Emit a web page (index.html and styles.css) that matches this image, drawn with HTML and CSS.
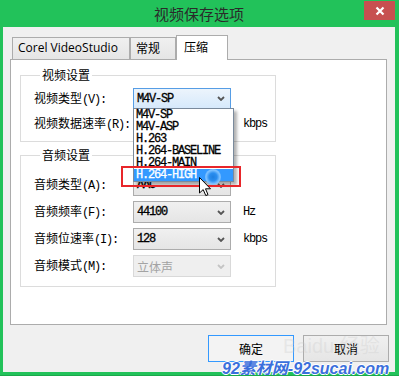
FILE: index.html
```
<!DOCTYPE html>
<html lang="zh-CN">
<head>
    <meta charset="UTF-8">
    <title>视频保存选项</title>
    <link rel="stylesheet" href="styles.css">
</head>
<body>
    <div class="window">
        <div class="titlebar">
            <span></span>
            <span class="title">视频保存选项</span>
            <span class="close">
                <svg width="10" height="10" viewBox="0 0 10 10"><path d="M1.5 1.5 L8.5 8.5 M8.5 1.5 L1.5 8.5" stroke="#fff" stroke-width="2.2"/></svg>
            </span>
        </div>
        <div class="client">
            <div class="tabs">
                <div class="tab">Corel VideoStudio</div>
                <div class="tab">常规</div>
                <div class="tab active">压缩</div>
            </div>
            <div class="panel">
                <fieldset class="group videoGroup">
                    <legend>视频设置</legend>
                    <div class="row">
                        <span class="label">视频类型<span class="mono">(V):</span></span>
                        <div class="combo focused">
                            <span class="mono value">M4V-SP</span>
                            <svg class="chevron" width="8" height="5" viewBox="0 0 8 5"><path d="M1 1 L4 4 L7 1" fill="none" stroke="#555" stroke-width="1.8"/></svg>
                            <!-- open drop-down list -->
                            <ul class="dropList mono value">
                                <li>M4V-SP</li>
                                <li>M4V-ASP</li>
                                <li>H.263</li>
                                <li>H.264-BASELINE</li>
                                <li>H.264-MAIN</li>
                                <li class="selected">H.264-HIGH</li>
                                <span class="redBox"></span>
                                <span class="busy"></span>
                                <svg class="cursor" width="13" height="20" viewBox="0 0 13 20"><path d="M0.5 0.5 L0.5 16 L4.2 12.6 L6.8 18.6 L9 17.6 L6.5 11.8 L11.5 11.8 Z" fill="#fff" stroke="#000" stroke-width="1"/></svg>
                            </ul>
                        </div>
                    </div>
                    <div class="row">
                        <span class="label">视频数据速率<span class="mono">(R):</span></span>
                        <div class="combo"></div>
                        <span class="unit mono">kbps</span>
                    </div>
                </fieldset>
                <fieldset class="group audioGroup">
                    <legend>音频设置</legend>
                    <div class="row">
                        <span class="label">音频类型<span class="mono">(A):</span></span>
                        <div class="combo">
                            <span class="mono value">AAC</span>
                            <svg class="chevron" width="8" height="5" viewBox="0 0 8 5"><path d="M1 1 L4 4 L7 1" fill="none" stroke="#555" stroke-width="1.8"/></svg>
                        </div>
                    </div>
                    <div class="row">
                        <span class="label">音频频率<span class="mono">(F):</span></span>
                        <div class="combo">
                            <span class="mono value">44100</span>
                            <svg class="chevron" width="8" height="5" viewBox="0 0 8 5"><path d="M1 1 L4 4 L7 1" fill="none" stroke="#555" stroke-width="1.8"/></svg>
                        </div>
                        <span class="unit mono">Hz</span>
                    </div>
                    <div class="row">
                        <span class="label">音频位速率<span class="mono">(I):</span></span>
                        <div class="combo">
                            <span class="mono value">128</span>
                            <svg class="chevron" width="8" height="5" viewBox="0 0 8 5"><path d="M1 1 L4 4 L7 1" fill="none" stroke="#555" stroke-width="1.8"/></svg>
                        </div>
                        <span class="unit mono">kbps</span>
                    </div>
                    <div class="row">
                        <span class="label">音频模式<span class="mono">(M):</span></span>
                        <div class="combo disabled">
                            <span>立体声</span>
                            <svg class="chevron" width="8" height="5" viewBox="0 0 8 5"><path d="M1 1 L4 4 L7 1" fill="none" stroke="#c4c4c4" stroke-width="1.8"/></svg>
                        </div>
                    </div>
                </fieldset>
            </div>
            <div class="buttons">
                <button class="btn default">确定</button>
                <button class="btn">取消</button>
            </div>
        </div>
        <div class="wmBaidu">Baidu 经验</div>
        <div class="wmSucai">92素材网-92sucai.com</div>
    </div>
</body>
</html>
```
FILE: styles.css
```
body {
    margin: 0;
    background: #ffffff;
    font-family: "Noto Sans CJK SC", "Noto Sans", sans-serif;
    font-size: 12px;
    color: #000000;
}

.window {
    position: relative;
    width: 399px;
    height: 376px;
    box-sizing: border-box;
    padding: 0 4px 4px 3px;
    background: #22c25a;
    border-bottom: 1px solid #1ba84b;
    overflow: hidden;
}

.titlebar {
    display: grid;
    grid-template-columns: 1fr auto 1fr;
    height: 27px;
}

.title {
    font-size: 15px;
    line-height: 27px;
    color: #2a2a2a;
}

.close {
    justify-self: end;
    align-self: start;
    margin-top: 1px;
    width: 31px;
    height: 19px;
    background: #c75050;
    display: flex;
    align-items: center;
    justify-content: center;
}

.client {
    height: 345px;
    background: #f0f0f0;
    padding-top: 8px;
    box-sizing: border-box;
}

.mono {
    font-family: "Liberation Mono", monospace;
    font-size: 12px;
    letter-spacing: -1.2px;
}

.value {
    -webkit-text-stroke: 0.3px currentColor;
}

/* tabs */
.tabs {
    display: flex;
    align-items: flex-end;
    height: 24px;
    margin-left: 9px;
}

.tab {
    height: 22px;
    box-sizing: border-box;
    border: 1px solid #acacac;
    border-bottom: none;
    background: linear-gradient(to bottom, #f0f0f0 0%, #e5e5e5 100%);
    font-family: "Open Sans", "Noto Sans CJK SC", sans-serif;
    font-size: 12px;
    line-height: 20px;
    padding: 0 5px 0 5px;
    color: #000;
}

.tab:nth-child(1) {
    width: 118px;
}

.tab:nth-child(2) {
    width: 46px;
    font-family: "Noto Sans CJK SC", sans-serif;
}

.tab.active {
    width: 52px;
    height: 25px;
    margin-bottom: -1px;
    background: #ffffff;
    font-family: "Noto Sans CJK SC", sans-serif;
    line-height: 22px;
    padding-left: 7px;
    position: relative;
}

.panel {
    margin-left: 7px;
    width: 377px;
    height: 266px;
    box-sizing: border-box;
    border: 1px solid #acacac;
    background: #ffffff;
    padding: 7px 0 0 9px;
}

/* group boxes */
.group {
    width: 256px;
    box-sizing: border-box;
    margin: 0;
    border: 1px solid #dcdcdc;
    padding: 5px 0 7px 13px;
    display: flex;
    flex-direction: column;
    gap: 4px;
}

.group legend {
    padding: 0 2px;
    margin-left: 6px;
    line-height: 16px;
    font-size: 12px;
}

.audioGroup {
    margin-top: 5px;
    padding: 11px 0 9px 13px;
    gap: 5px;
}

.row {
    display: flex;
    align-items: center;
}

.label {
    width: 99px;
    flex-shrink: 0;
    line-height: 16px;
}

.combo {
    position: relative;
    width: 98px;
    height: 22px;
    box-sizing: border-box;
    border: 1px solid #acacac;
    background: linear-gradient(to bottom, #f0f0f0 0%, #e5e5e5 100%);
    display: flex;
    align-items: center;
    justify-content: space-between;
    padding: 0 5px 0 3px;
}

.videoGroup .combo {
    height: 21px;
}

.combo.focused {
    border-color: #569de5;
    background: linear-gradient(to bottom, #ecf4fc 0%, #d6e9fb 100%);
}

.combo.disabled {
    border-color: #d9d9d9;
    background: #efefef;
    color: #a3a3a3;
}

.chevron {
    display: block;
}

.unit {
    margin-left: 12px;
}

/* open list of the first combo */
.dropList {
    position: absolute;
    left: -1px;
    top: 19px;
    width: 99px;
    margin: 0;
    padding: 0;
    list-style: none;
    background: #ffffff;
    border: 1px solid #7a8a9c;
    box-shadow: 3px 3px 3px rgba(0, 0, 0, 0.3);
    z-index: 5;
}

.dropList li {
    height: 12px;
    line-height: 12px;
    padding-left: 2px;
    white-space: nowrap;
}

.dropList li.selected {
    background: #3399ff;
    color: #ffffff;
}

.redBox {
    position: absolute;
    left: -13px;
    top: 57px;
    width: 120px;
    height: 21px;
    box-sizing: border-box;
    border: 2px solid #e8262a;
}

.busy {
    position: absolute;
    left: 71px;
    top: 60px;
    width: 16px;
    height: 16px;
    border-radius: 50%;
    background: radial-gradient(circle, #1f7fe0 0%, #2b8ef0 35%, #7cc0ff 60%, rgba(140, 200, 255, 0.4) 100%);
}

.cursor {
    position: absolute;
    left: 65px;
    top: 68px;
}

/* buttons */
.buttons {
    display: flex;
    justify-content: flex-end;
    gap: 9px;
    margin-top: 10px;
    padding-right: 6px;
}

.btn {
    width: 86px;
    height: 27px;
    border: 1px solid #acacac;
    background: linear-gradient(to bottom, #f0f0f0 0%, #e5e5e5 100%);
    font-family: "Noto Sans CJK SC", sans-serif;
    font-size: 12px;
    color: #000;
    padding: 0;
}

.btn.default {
    border-color: #3399ff;
    background: #f3f3f3;
}

/* watermarks */
.wmBaidu {
    position: absolute;
    left: 283px;
    top: 330px;
    font-family: "Liberation Sans", "Noto Sans CJK SC", sans-serif;
    font-size: 20px;
    color: rgba(200, 200, 200, 0.3);
    white-space: nowrap;
}

.wmSucai {
    position: absolute;
    left: 222px;
    top: 355px;
    font-family: "Liberation Sans", "Noto Sans CJK SC", sans-serif;
    font-size: 16px;
    font-weight: bold;
    font-style: italic;
    color: #3b6fdc;
    text-shadow: 1px 0 0 #fff, -1px 0 0 #fff, 0 1px 0 #fff, 0 -1px 0 #fff;
    white-space: nowrap;
}
```
